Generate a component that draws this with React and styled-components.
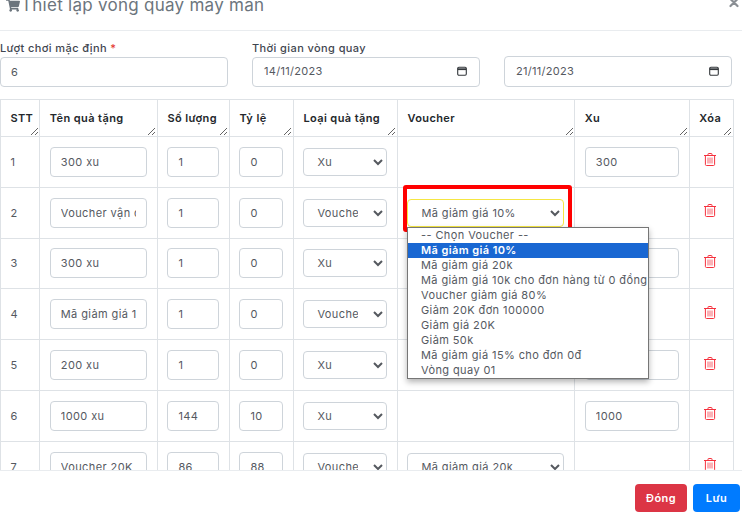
import React from "react";
import styled, { createGlobalStyle } from "styled-components";

const GlobalStyle = createGlobalStyle`
  html, body {
    margin: 0;
    padding: 0;
    background: #fff;
    overflow: hidden;
  }
  * {
    box-sizing: border-box;
    font-family: "Inter", "Noto Sans", sans-serif;
    letter-spacing: 0.4px;
  }
`;

const Modal = styled.div`
  position: relative;
  width: 742px;
  height: 514px;
  display: flex;
  flex-direction: column;
  overflow: hidden;
  background: #fff;
`;

const Header = styled.div`
  height: 31px;
  flex: none;
  display: flex;
  align-items: flex-end;
  justify-content: space-between;
  padding: 0 3px 13px 6px;
  border-bottom: 1px solid #e9ecef;
  overflow: hidden;
`;

const Title = styled.h5`
  margin: 0;
  display: flex;
  align-items: center;
  gap: 1px;
  font-size: 17px;
  font-weight: 400;
  line-height: 24px;
  letter-spacing: 0.27px;
  color: #6c757d;
  white-space: nowrap;
`;

const Close = styled.span`
  color: #8a8f94;
  align-self: flex-start;
  display: flex;
`;

const Body = styled.div`
  flex: 1;
  min-height: 0;
  overflow: hidden;
  padding: 9px 10px 0 0;
`;

const TopRow = styled.div`
  display: grid;
  grid-template-columns: repeat(3, 228px);
  column-gap: 24px;
  height: 59px;
`;

const Field = styled.div`
  display: flex;
  flex-direction: column;
  justify-content: flex-end;
  height: 47px;
`;

const Label = styled.label`
  margin-bottom: 1px;
  font-size: 11px;
  font-weight: 500;
  line-height: 16px;
  color: #3f4650;
  white-space: nowrap;
  em {
    color: #e3342f;
    font-style: normal;
  }
`;

const TextBox = styled.input`
  width: 100%;
  height: ${(p) => p.$h || 30}px;
  padding: 0 10px;
  border: 1px solid #ced4da;
  border-radius: 4px;
  background: #fff;
  color: #55595f;
  font-size: 11px;
  outline: none;
`;

const DateBox = styled.div`
  height: 31px;
  display: flex;
  align-items: center;
  justify-content: space-between;
  padding: 0 12px 2px 11px;
  border: 1px solid #ced4da;
  border-radius: 4px;
  color: #55595f;
  font-size: 11px;
  letter-spacing: 0.3px;
`;

const Table = styled.table`
  width: 733px;
  table-layout: fixed;
  border-collapse: collapse;
  color: #55595f;
`;

const Col = styled.col`
  width: ${(p) => p.$w}px;
`;

const Th = styled.th`
  height: 37px;
  padding: 0 10px 0 9.4px;
  border: 1px solid #dee2e6;
  text-align: left;
  vertical-align: middle;
  font-size: 11px;
  font-weight: 600;
  color: #23272b;
  white-space: nowrap;
  overflow: hidden;
  resize: horizontal;
`;

const Td = styled.td`
  height: 50.8px;
  padding: 0 10px 0 9.4px;
  border: 1px solid #dee2e6;
  vertical-align: middle;
  font-size: 11px;
`;

const Select = styled.select`
  width: 100%;
  height: 28px;
  padding: 0 12px 0 9px;
  border: 1px solid ${(p) => (p.$active ? "#f5e642" : "#ced4da")};
  border-radius: 4px;
  background: #fff;
  color: #55595f;
  font-size: 11px;
  outline: none;
`;

const TrashButton = styled.span`
  display: flex;
  justify-content: center;
  padding-right: 2px;
  margin-bottom: 4px;
  color: #f5323e;
`;

const Footer = styled.div`
  height: 44px;
  flex: none;
  display: flex;
  justify-content: flex-end;
  align-items: flex-start;
  gap: 6px;
  padding: 13px 2px 0 0;
  border-top: 1px solid #e9ecef;
`;

const Button = styled.button`
  width: ${(p) => p.$w}px;
  height: 28px;
  padding: 0;
  border: none;
  border-radius: 4px;
  background: ${(p) => (p.$danger ? "#dc3545" : "#007bff")};
  color: #fff;
  font-size: 11px;
  font-weight: 600;
`;

const Highlight = styled.div`
  position: absolute;
  left: 403px;
  top: 185px;
  width: 169px;
  height: 47px;
  border: 4px solid #ff0000;
  border-radius: 3px;
  pointer-events: none;
`;

const Dropdown = styled.ul`
  position: absolute;
  left: 407px;
  top: 227px;
  width: 242px;
  height: 152px;
  margin: 0;
  padding: 0;
  list-style: none;
  overflow: hidden;
  background: #fff;
  border: 1px solid #767676;
  box-shadow: 0 3px 6px rgba(0, 0, 0, 0.3);
`;

const Option = styled.li`
  height: 15px;
  line-height: 15px;
  padding-left: 13px;
  font-size: 11px;
  white-space: nowrap;
  background: ${(p) => (p.$selected ? "#1967d2" : "transparent")};
  color: ${(p) => (p.$selected ? "#fff" : "#55595f")};
  font-weight: ${(p) => (p.$selected ? 600 : 400)};
`;

const CartIcon = () => (
  <svg width="14" height="13" viewBox="0 0 576 512" fill="#6c757d">
    <path d="M528 301l47-208c3-15-8-29-23-29H159l-9-45C147 8 137 0 126 0H24C11 0 0 11 0 24v16c0 13 11 24 24 24h70l70 343c-17 10-28 28-28 49 0 31 25 56 56 56s56-25 56-56c0-16-6-30-17-40h210c-11 10-17 24-17 40 0 31 25 56 56 56s56-25 56-56c0-22-13-41-32-50l5-24c3-15-8-29-23-29H218l-7-32h293c11 0 21-8 24-19z" />
  </svg>
);

const CloseIcon = () => (
  <svg width="10" height="10" viewBox="0 0 10 10" stroke="currentColor" strokeWidth="2.2" strokeLinecap="round">
    <path d="M1.5 -1L8.5 6M8.5 -1L1.5 6" />
  </svg>
);

const CalendarIcon = () => (
  <svg width="10" height="10" viewBox="0 0 10 10" fill="none" stroke="#33373b">
    <rect x="0.7" y="1.2" width="8.6" height="8.1" rx="1.2" strokeWidth="1.1" />
    <path d="M0.7 3.2H9.3" strokeWidth="1.8" />
  </svg>
);

const TrashIcon = () => (
  <svg width="12" height="13" viewBox="0 0 12 13" fill="none" stroke="currentColor" strokeWidth="1">
    <path d="M0 2.5H12M4 2.5V1.1C4 .7 4.3.5 4.6.5H7.4C7.7.5 8 .7 8 1.1V2.5" />
    <path d="M1.4 2.5V11.5C1.4 12.1 1.8 12.5 2.4 12.5H9.6C10.2 12.5 10.6 12.1 10.6 11.5V2.5" />
    <path d="M4 4.5V10.5M6 4.5V10.5M8 4.5V10.5" opacity="0.75" />
  </svg>
);

const columns = [
  { label: "STT", width: 39.4 },
  { label: "Tên quà tặng", width: 117.6 },
  { label: "Số lượng", width: 72 },
  { label: "Tỷ lệ", width: 64 },
  { label: "Loại quà tặng", width: 104 },
  { label: "Voucher", width: 177.4 },
  { label: "Xu", width: 114.6 },
  { label: "Xóa", width: 44 },
];

const rows = [
  { id: 1, name: "300 xu", qty: 1, rate: 0, type: "Xu", xu: "300" },
  { id: 2, name: "Voucher vận chuyển", qty: 1, rate: 0, type: "Voucher", voucher: "Mã giảm giá 10%", active: true },
  { id: 3, name: "300 xu", qty: 1, rate: 0, type: "Xu", xu: "300" },
  { id: 4, name: "Mã giảm giá 10k", qty: 1, rate: 0, type: "Voucher", voucher: "Mã giảm giá 20k" },
  { id: 5, name: "200 xu", qty: 1, rate: 0, type: "Xu", xu: "200" },
  { id: 6, name: "1000 xu", qty: 144, rate: 10, type: "Xu", xu: "1000" },
  { id: 7, name: "Voucher 20K", qty: 86, rate: 88, type: "Voucher", voucher: "Mã giảm giá 20k" },
];

const voucherOptions = [
  "-- Chọn Voucher --",
  "Mã giảm giá 10%",
  "Mã giảm giá 20k",
  "Mã giảm giá 10k cho đơn hàng từ 0 đồng",
  "Voucher giảm giá 80%",
  "Giảm 20K đơn 100000",
  "Giảm giá 20K",
  "Giảm 50k",
  "Mã giảm giá 15% cho đơn 0đ",
  "Vòng quay 01",
];

const App = () => {
  return (
    <Modal>
      <GlobalStyle />
      <Header>
        <Title>
          <CartIcon />
          Thiết lập vòng quay may mắn
        </Title>
        <Close>
          <CloseIcon />
        </Close>
      </Header>
      <Body>
        <TopRow>
          <Field>
            <Label>
              Lượt chơi mặc định <em>*</em>
            </Label>
            <TextBox $h={31} defaultValue="6" />
          </Field>
          <Field>
            <Label>Thời gian vòng quay</Label>
            <DateBox>
              14/11/2023
              <CalendarIcon />
            </DateBox>
          </Field>
          <Field>
            <DateBox>
              21/11/2023
              <CalendarIcon />
            </DateBox>
          </Field>
        </TopRow>
        <Table>
          <colgroup>
            {columns.map((c) => (
              <Col key={c.label} $w={c.width} />
            ))}
          </colgroup>
          <thead>
            <tr>
              {columns.map((c) => (
                <Th key={c.label}>{c.label}</Th>
              ))}
            </tr>
          </thead>
          <tbody>
            {rows.map((r) => (
              <tr key={r.id}>
                <Td>{r.id}</Td>
                <Td>
                  <TextBox defaultValue={r.name} />
                </Td>
                <Td>
                  <TextBox defaultValue={r.qty} />
                </Td>
                <Td>
                  <TextBox defaultValue={r.rate} />
                </Td>
                <Td>
                  <Select defaultValue={r.type}>
                    <option>Xu</option>
                    <option>Voucher</option>
                  </Select>
                </Td>
                <Td>
                  {r.voucher && (
                    <Select $active={r.active} defaultValue={r.voucher}>
                      {voucherOptions.map((o) => (
                        <option key={o}>{o}</option>
                      ))}
                    </Select>
                  )}
                </Td>
                <Td>{r.xu && <TextBox defaultValue={r.xu} />}</Td>
                <Td>
                  <TrashButton>
                    <TrashIcon />
                  </TrashButton>
                </Td>
              </tr>
            ))}
          </tbody>
        </Table>
      </Body>
      <Footer>
        <Button $danger $w={52}>Đóng</Button>
        <Button $w={47}>Lưu</Button>
      </Footer>
      <Highlight />
      <Dropdown>
        {voucherOptions.map((o, i) => (
          <Option key={o} $selected={i === 1}>
            {o}
          </Option>
        ))}
      </Dropdown>
    </Modal>
  );
};

export default App;
